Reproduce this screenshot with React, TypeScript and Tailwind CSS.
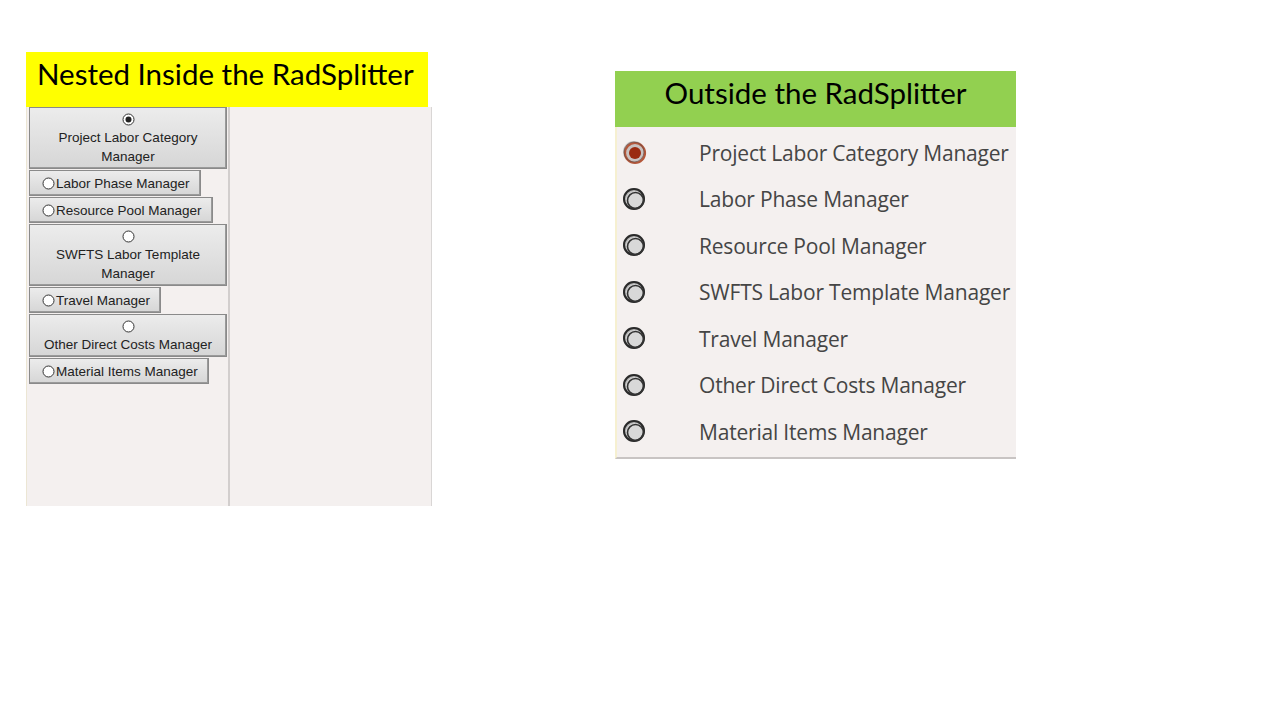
import React from "react";

type Item = {
  label: string;
  lines?: string[];
  width: number;
  stacked: boolean;
};

const items: Item[] = [
  { label: "Project Labor Category Manager", lines: ["Project Labor Category", "Manager"], width: 198, stacked: true },
  { label: "Labor Phase Manager", width: 172, stacked: false },
  { label: "Resource Pool Manager", width: 184, stacked: false },
  { label: "SWFTS Labor Template Manager", lines: ["SWFTS Labor Template", "Manager"], width: 198, stacked: true },
  { label: "Travel Manager", width: 132, stacked: false },
  { label: "Other Direct Costs Manager", lines: ["Other Direct Costs Manager"], width: 198, stacked: true },
  { label: "Material Items Manager", width: 180, stacked: false },
];

function SmallRadio({ checked }: { checked?: boolean }) {
  return (
    <svg width="13" height="13" viewBox="0 0 13 13" className="shrink-0">
      <circle cx="6.5" cy="6.5" r="5.5" fill="#fff" stroke="#333" strokeWidth="1" />
      {checked && <circle cx="6.5" cy="6.5" r="3" fill="#222" />}
    </svg>
  );
}

function FancyRadio({ checked }: { checked?: boolean }) {
  if (checked) {
    return (
      <svg width="28" height="28" viewBox="0 0 28 28" className="shrink-0">
        <circle cx="13" cy="13" r="11" fill="#c9c2c0" />
        <circle cx="14" cy="14" r="10" fill="none" stroke="#b4573a" strokeWidth="2.2" />
        <circle cx="13" cy="13" r="10" fill="none" stroke="#5a4a46" strokeWidth="1" opacity="0.6" />
        <circle cx="14" cy="14" r="6" fill="#9a2a10" />
      </svg>
    );
  }
  return (
    <svg width="28" height="28" viewBox="0 0 28 28" className="shrink-0">
      <circle cx="13" cy="13" r="11" fill="#b8b8b8" />
      <circle cx="14" cy="14" r="9" fill="#d8d8d8" />
      <circle cx="13" cy="13" r="10" fill="none" stroke="#2a2a2a" strokeWidth="2" />
      <circle cx="14.5" cy="14.5" r="8" fill="none" stroke="#333" strokeWidth="1.6" />
    </svg>
  );
}

function NestedButton({ item, checked }: { item: Item; checked?: boolean }) {
  const base =
    "border border-[#8a8a8a] bg-gradient-to-b from-[#ececec] to-[#d6d6d6] text-[13.5px] leading-[19px] text-[#222] shadow-[inset_-1px_-1px_0_#9a9a9a]";
  if (item.stacked) {
    return (
      <div className={`${base} flex flex-col items-center pt-[5px] pb-[2px]`} style={{ width: item.width }}>
        <div className="mb-[2px]">
          <SmallRadio checked={checked} />
        </div>
        {item.lines?.map((l) => (
          <span key={l}>{l}</span>
        ))}
      </div>
    );
  }
  return (
    <div className={`${base} flex h-[26px] items-center gap-[1px] pl-[12px]`} style={{ width: item.width }}>
      <SmallRadio checked={checked} />
      <span>{item.label}</span>
    </div>
  );
}

export default function App() {
  return (
    <div className="relative h-[720px] w-[1280px] bg-white">
      <div className="flex items-start gap-[183px] pl-[26px] pt-[52px]">
        <div className="flex w-[406px] flex-col">
          <div
            className="flex h-[55px] w-[402px] items-center bg-[#ffff00] pb-[10px] pl-[11px] text-[29.5px] text-black"
            style={{ fontFamily: "Lato, 'Open Sans', sans-serif" }}
          >
            Nested Inside the RadSplitter
          </div>
          <div className="flex h-[399px] bg-[#f4f0ef]" style={{ fontFamily: "'Liberation Sans', Arial, sans-serif" }}>
            <div className="w-[3px] border-l border-[#ece6d4]" />
            <div className="flex w-[201px] flex-col gap-[1px] border-r-2 border-[#d2cecd]">
              {items.map((it, i) => (
                <NestedButton key={it.label} item={it} checked={i === 0} />
              ))}
            </div>
            <div className="flex-1 border-r border-[#d9d6d5]" />
          </div>
        </div>

        <div className="mt-[19px] flex w-[401px] flex-col">
          <div
            className="flex h-[56px] items-center justify-center bg-[#92d050] pb-[12px] text-[29.5px] text-black"
            style={{ fontFamily: "Lato, 'Open Sans', sans-serif" }}
          >
            Outside the RadSplitter
          </div>
          <div
            className="flex flex-col border-b-2 border-l-2 border-b-[#c8c4c3] border-l-[#f6f0d0] bg-[#f4f0ef] pb-[1px] pt-[3px]"
            style={{ fontFamily: "'Open Sans', 'Noto Sans', sans-serif" }}
          >
            {items.map((it, i) => (
              <div key={it.label} className="flex h-[46.5px] items-center gap-[50px] pl-[4px] text-[21px] tracking-[-0.2px] text-[#454545]">
                <FancyRadio checked={i === 0} />
                <span>{it.label}</span>
              </div>
            ))}
          </div>
        </div>
      </div>
    </div>
  );
}
